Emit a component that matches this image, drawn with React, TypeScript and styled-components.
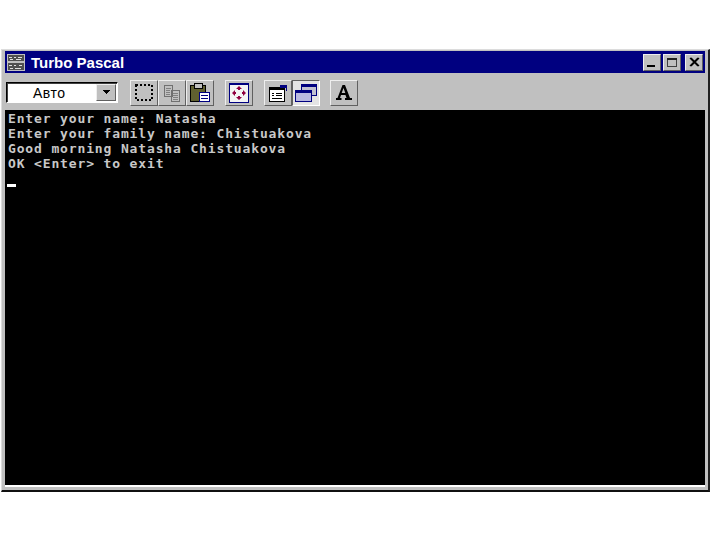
import React from "react";
import styled, { createGlobalStyle } from "styled-components";

const Global = createGlobalStyle`
  html, body { margin: 0; padding: 0; background: #fff; width: 720px; height: 540px; overflow: hidden; }
  #root { width: 720px; height: 540px; }
`;

const Page = styled.div`
  box-sizing: border-box;
  width: 720px;
  height: 540px;
  padding: 49px 10px 48px 1px;
`;

const Win = styled.div`
  box-sizing: border-box;
  height: 100%;
  display: flex;
  flex-direction: column;
  background: #c0c0c0;
  border-top: 1px solid #dcdcdc;
  border-left: 1px solid #dcdcdc;
  border-right: 2px solid #202020;
  border-bottom: 2px solid #101010;
  padding: 1px 3px 3px 3px;
`;

const TitleBar = styled.div`
  height: 22px;
  flex: none;
  background: #000080;
  display: flex;
  align-items: center;
  padding: 0 2px 0 2px;
  gap: 6px;
`;

const Title = styled.span`
  font: bold 15px "Liberation Sans", Arial, sans-serif;
  color: #fff;
  flex: 1;
`;

const WinButtons = styled.div`
  display: flex;
`;

const WinBtn = styled.div<{ $ml: number }>`
  box-sizing: border-box;
  width: 18px;
  height: 17px;
  margin-left: ${(p) => p.$ml}px;
  background: #c0c0c0;
  border: 1px solid;
  border-color: #eee #606060 #606060 #eee;
  display: flex;
  align-items: center;
  justify-content: center;
`;

const ToolBar = styled.div`
  box-sizing: border-box;
  height: 37px;
  flex: none;
  display: flex;
  align-items: center;
  padding: 2px 0 0 1px;
`;

const Combo = styled.div`
  box-sizing: border-box;
  width: 112px;
  height: 21px;
  background: #fff;
  border: 1px solid;
  border-color: #000 #fff #fff #000;
  box-shadow: inset 1px 1px 0 #404040;
  display: flex;
  align-items: center;
  justify-content: space-between;
  padding: 1px 1px 1px 26px;
  margin-right: 12px;
`;

const ComboText = styled.span`
  font: 14px "Liberation Sans", Arial, sans-serif;
  letter-spacing: 0.5px;
  color: #000;
`;

const ComboArrow = styled.div`
  box-sizing: border-box;
  width: 20px;
  height: 17px;
  background: #c0c0c0;
  border: 1px solid;
  border-color: #eee #606060 #606060 #eee;
  display: flex;
  align-items: center;
  justify-content: center;
`;

const ToolBtn = styled.div<{ $pressed?: boolean; $ml?: number }>`
  box-sizing: border-box;
  width: 28px;
  height: 26px;
  margin-left: ${(p) => p.$ml ?? 0}px;
  background: ${(p) => (p.$pressed ? "#e4e4e4" : "#c0c0c0")};
  border: 1px solid;
  border-color: ${(p) => (p.$pressed ? "#606060 #fff #fff #606060" : "#eee #606060 #606060 #eee")};
  display: flex;
  align-items: center;
  justify-content: center;
`;

const Terminal = styled.div`
  flex: 1;
  background: #000;
  border-bottom: 2px solid #fff;
  padding: 1px 0 0 3px;
  display: flex;
  flex-direction: column;
`;

const Line = styled.div`
  font: bold 13px/15px "DejaVu Sans Mono", "Liberation Mono", monospace;
  letter-spacing: 0.86px;
  color: #c8c8c8;
  white-space: pre;
  height: 15px;
`;

const Cursor = styled.div`
  width: 9px;
  height: 3px;
  margin: 13px 0 0 -1px;
  background: #fff;
`;

const Svg: React.FC<{ children: React.ReactNode; w?: number; h?: number }> = ({ children, w = 20, h = 20 }) => (
  <svg width={w} height={h} viewBox={`0 0 ${w} ${h}`} shapeRendering="crispEdges">{children}</svg>
);

export default function App() {
  return (
    <Page>
      <Global />
      <Win>
        <TitleBar>
          <Svg w={18} h={17}>
            <rect x="0" y="0" width="18" height="17" fill="#c0c0c0" />
            <rect x="1" y="1" width="16" height="6" fill="#505050" />
            <rect x="1" y="9" width="16" height="7" fill="#505050" />
            <path d="M2 3h3M7 3h2M11 3h4M3 5h3M9 5h5M2 11h3M7 11h2M12 11h3M3 14h3M8 14h6" stroke="#e0e0e0" />
          </Svg>
          <Title>Turbo Pascal</Title>
          <WinButtons>
            <WinBtn $ml={0}><Svg w={12} h={11}><rect x="1" y="8" width="8" height="2" fill="#000" /></Svg></WinBtn>
            <WinBtn $ml={2}><Svg w={12} h={11}><rect x="1.5" y="1.500" width="9" height="8" fill="none" stroke="#404040" /><rect x="1" y="1" width="10" height="2" fill="#202020" /></Svg></WinBtn>
            <WinBtn $ml={4}><Svg w={12} h={11}><path d="M2 1l8 8M3 1l8 8M10 1L2 9M11 1L3 9" stroke="#000" shapeRendering="auto" strokeWidth="1.3" /></Svg></WinBtn>
          </WinButtons>
        </TitleBar>
        <ToolBar>
          <Combo>
            <ComboText>Авто</ComboText>
            <ComboArrow><Svg w={9} h={5}><path d="M1 0h7v1H7v1H6v1H5v1H4V3H3V2H2V1H1z" fill="#000" /></Svg></ComboArrow>
          </Combo>
          <ToolBtn>
            <Svg w={18} h={17}><rect x="1" y="1" width="16" height="15" fill="none" stroke="#000" strokeWidth="2" strokeDasharray="2 2" /></Svg>
          </ToolBtn>
          <ToolBtn>
            <Svg w={18} h={18}>
              <path d="M1.500 1.500h8v11h-8zM8.500 6.500h8v11h-8z" fill="#c0c0c0" stroke="#707070" />
              <path d="M3 4h5M3 6h4M3 8h4M3 10h4M10 9h5M10 11h5M10 13h5M10 15h5" stroke="#808080" />
            </Svg>
          </ToolBtn>
          <ToolBtn>
            <Svg w={22} h={20}>
              <rect x="1.500" y="2.500" width="15" height="16" fill="#606030" stroke="#000" />
              <rect x="5" y="0" width="8" height="5" fill="#c0c0c0" stroke="#000" />
              <rect x="10.500" y="9.500" width="10" height="9" fill="#fff" stroke="#000080" />
              <path d="M12 12h7M12 15h7" stroke="#000080" />
            </Svg>
          </ToolBtn>
          <ToolBtn $ml={11}>
            <Svg w={20} h={20}>
              <rect x="0.500" y="0.500" width="19" height="19" fill="#f4f4f4" stroke="#000080" />
              <rect x="0" y="0" width="20" height="2" fill="#000080" />
              <path d="M10 7V4M10 13v3M7 10H4M13 10h3" stroke="#900040" strokeWidth="2" fill="none" />
              <path d="M7 6l3-3 3 3zM7 14l3 3 3-3zM6 7l-3 3 3 3zM14 7l3 3-3 3z" fill="#900040" shapeRendering="auto" />
            </Svg>
          </ToolBtn>
          <ToolBtn $ml={11}>
            <Svg w={22} h={20}>
              <rect x="2.500" y="5.500" width="15" height="13" fill="#fff" stroke="#000" />
              <rect x="2" y="4" width="16" height="3" fill="#000" />
              <path d="M5 10h2M9 10h6M5 12h2M9 12h6M5 15h10" stroke="#000" />
              <rect x="13" y="2" width="7" height="3" fill="#000080" />
              <path d="M19.500 3v5" stroke="#000080" />
            </Svg>
          </ToolBtn>
          <ToolBtn $pressed>
            <Svg w={24} h={20}>
              <rect x="7.500" y="1.500" width="15" height="11" fill="#c0c0d0" stroke="#000080" />
              <rect x="7" y="1" width="16" height="3" fill="#000080" />
              <rect x="1.500" y="7.500" width="16" height="11" fill="#b8b8e0" stroke="#000080" />
              <rect x="1" y="7" width="17" height="3" fill="#000080" />
            </Svg>
          </ToolBtn>
          <ToolBtn $ml={10}>
            <Svg w={20} h={20}>
              <path d="M8.500 2h2.500l5 13h2v2h-7v-2h1.500l-1-3H7l-1 3h1.500v2H2v-2h1.500zM7.700 10h3.600L9.500 5z" fill="#000" fillRule="evenodd" shapeRendering="auto" />
            </Svg>
          </ToolBtn>
        </ToolBar>
        <Terminal>
          <Line>Enter your name: Natasha</Line>
          <Line>Enter your family name: Chistuakova</Line>
          <Line>Good morning Natasha Chistuakova</Line>
          <Line>OK &lt;Enter&gt; to exit</Line>
          <Cursor />
        </Terminal>
      </Win>
    </Page>
  );
}
